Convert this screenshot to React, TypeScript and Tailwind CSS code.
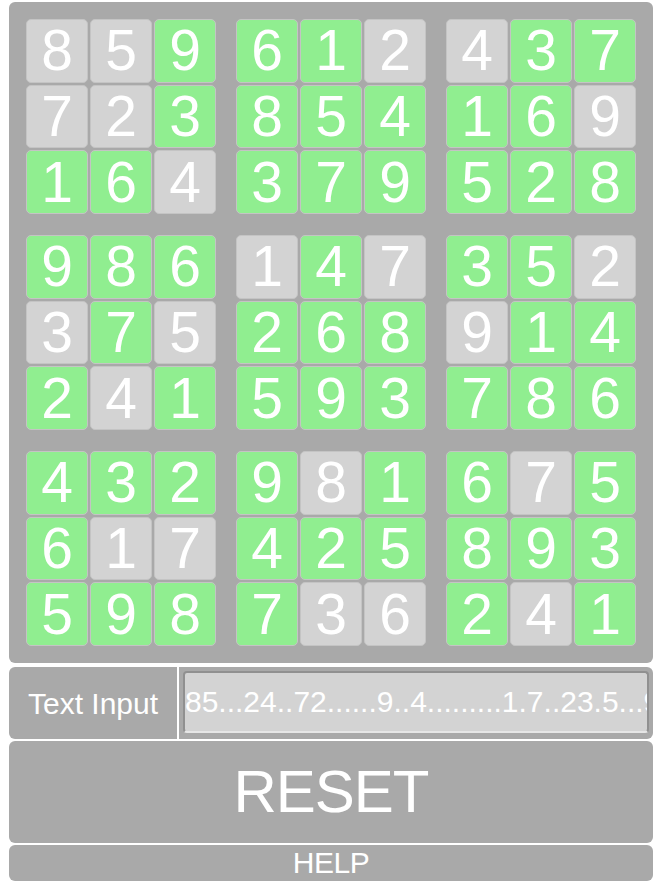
import React, { useState } from 'react';

// givens ('.' = empty) and the solved board, row by row
const PUZZLE =
  '85...24..72......9..4.........1.7..23.5...9...4.......' +
  '....8..7..17..........36.4.';
const SOLUTION =
  '859612437723854169164379528986147352375268914241593786' +
  '432981675617425893598736241';

const font = { fontFamily: '"Liberation Sans", Arial, sans-serif' };

const Cell: React.FC<{ value: string; given: boolean }> = ({ value, given }) => (
  <div
    className={`flex items-center justify-center rounded-[5px] border border-[#c4c4c4] text-[57px] leading-none text-white ${
      given ? 'bg-[#d3d3d3]' : 'bg-[#90ee90]'
    }`}
  >
    {value}
  </div>
);

const Box: React.FC<{ br: number; bc: number }> = ({ br, bc }) => {
  const cells = [];
  for (let r = 0; r < 3; r++) {
    for (let c = 0; c < 3; c++) {
      const idx = (br * 3 + r) * 9 + bc * 3 + c;
      cells.push(
        <Cell key={idx} value={SOLUTION[idx]} given={PUZZLE[idx] !== '.'} />
      );
    }
  }
  return (
    <div className="grid h-[195px] w-[190px] grid-cols-3 grid-rows-3 gap-[2px]">
      {cells}
    </div>
  );
};

export default function App() {
  const [text, setText] = useState(PUZZLE);

  return (
    <div className="flex min-h-[888px] flex-col bg-white px-[9px] pt-[2px]" style={font}>
      {/* Board */}
      <div className="grid grid-cols-3 gap-x-[20px] gap-y-[21px] rounded-[6px] bg-[#a9a9a9] p-[17px]">
        {[0, 1, 2].map((br) =>
          [0, 1, 2].map((bc) => <Box key={`${br}-${bc}`} br={br} bc={bc} />)
        )}
      </div>

      {/* Text input row */}
      <div className="mt-[4px] flex h-[72px] overflow-hidden rounded-[6px]">
        <div className="flex w-[168px] items-center justify-center bg-[#a9a9a9] text-[30px] text-white">
          Text Input
        </div>
        <div className="w-[2px] bg-white" />
        <div className="flex-1 bg-[#a9a9a9] pt-[4px] pr-[4px] pb-[6px] pl-[4px]">
          <input
            value={text}
            onChange={(e) => setText(e.target.value)}
            className="h-full w-full rounded-[4px] border-2 border-[#909090] border-b-[#e6e6e6] bg-[#d3d3d3] px-0 text-[30px] text-white outline-none"
            style={font}
          />
        </div>
      </div>

      <button
        className="mt-[2px] flex h-[102px] items-center justify-center rounded-[6px] bg-[#a9a9a9] text-[60px] tracking-[-1px] text-white"
        onClick={() => setText(PUZZLE)}
      >
        RESET
      </button>

      <button className="mt-[2px] flex h-[36px] items-center justify-center rounded-[6px] bg-[#a9a9a9] text-[30px] leading-none tracking-[-0.5px] text-white">
        HELP
      </button>
    </div>
  );
}
